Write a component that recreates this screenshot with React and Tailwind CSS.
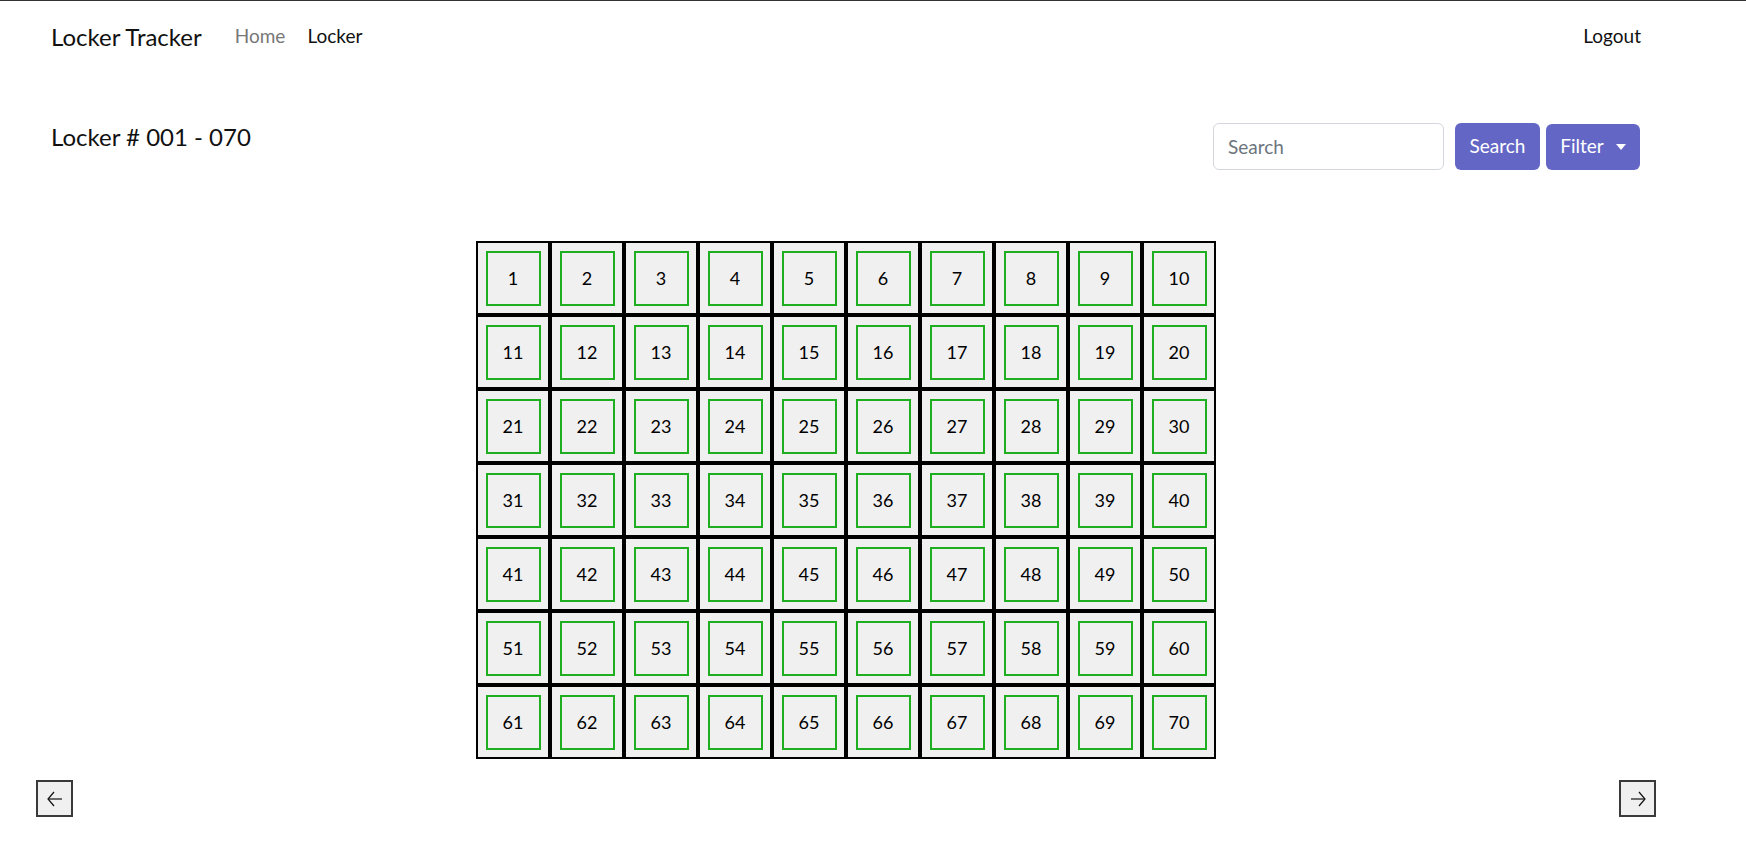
import React from "react";

function Arrow({ dir }) {
  return (
    <svg width="18" height="16" viewBox="0 0 18 16" fill="none" stroke="#111" strokeWidth="1.2">
      {dir === "left" ? (
        <>
          <path d="M2 8 H16" />
          <path d="M8 1 L2 8 L8 15" />
        </>
      ) : (
        <>
          <path d="M2 8 H16" />
          <path d="M10 1 L16 8 L10 15" />
        </>
      )}
    </svg>
  );
}

export default function App() {
  const nums = Array.from({ length: 70 }, (_, i) => i + 1);
  return (
    <div
      className="min-h-screen w-full bg-white border-t border-[#333] text-[#111]"
      style={{ fontFamily: "Lato, 'Noto Sans', sans-serif" }}
    >
      <nav className="flex items-center h-[71px] pl-[51px] pr-[105px]">
        <span className="text-[24px]">Locker Tracker</span>
        <span className="ml-[33px] text-[19px] text-[#777]">Home</span>
        <span className="ml-[22px] text-[19px] text-[#111]">Locker</span>
        <span className="ml-auto text-[19px] text-[#111]">Logout</span>
      </nav>

      <div className="flex items-start mt-[51px] pl-[51px] pr-[106px]">
        <h1 className="text-[24px] leading-[28px] font-normal">Locker # 001 - 070</h1>
        <div className="ml-auto flex items-center">
          <input
            className="w-[231px] h-[47px] rounded-[6px] border border-[#d3d7dc] px-[14px] text-[19px] text-[#333] placeholder:text-[#6c757d] outline-none"
            placeholder="Search"
          />
          <button className="ml-[11px] w-[85px] h-[47px] rounded-[6px] bg-[#6366c5] text-white text-[19px]">
            Search
          </button>
          <button className="ml-[6px] w-[94px] h-[46px] rounded-[6px] bg-[#6366c5] text-white text-[19px] flex items-center justify-center gap-[12px]">
            Filter
            <span className="w-0 h-0 border-l-[5px] border-r-[5px] border-t-[6px] border-l-transparent border-r-transparent border-t-white"></span>
          </button>
        </div>
      </div>

      <div className="mt-[71px] ml-[476px] w-fit grid grid-cols-10">
        {nums.map((n) => (
          <div key={n} className="w-[74px] h-[74px] border-2 border-black bg-[#f0f0f0] flex items-center justify-center">
            <div className="w-[55px] h-[55px] border-2 border-[#1fae1f] flex items-center justify-center text-[18px] text-black">
              {n}
            </div>
          </div>
        ))}
      </div>

      <div className="flex justify-between mt-[21px] pl-[36px] pr-[90px]">
        <button className="w-[37px] h-[37px] border-2 border-[#3a3a3a] bg-[#f0f0f0] flex items-center justify-center">
          <Arrow dir="left" />
        </button>
        <button className="w-[37px] h-[37px] border-2 border-[#3a3a3a] bg-[#f0f0f0] flex items-center justify-center">
          <Arrow dir="right" />
        </button>
      </div>
    </div>
  );
}
